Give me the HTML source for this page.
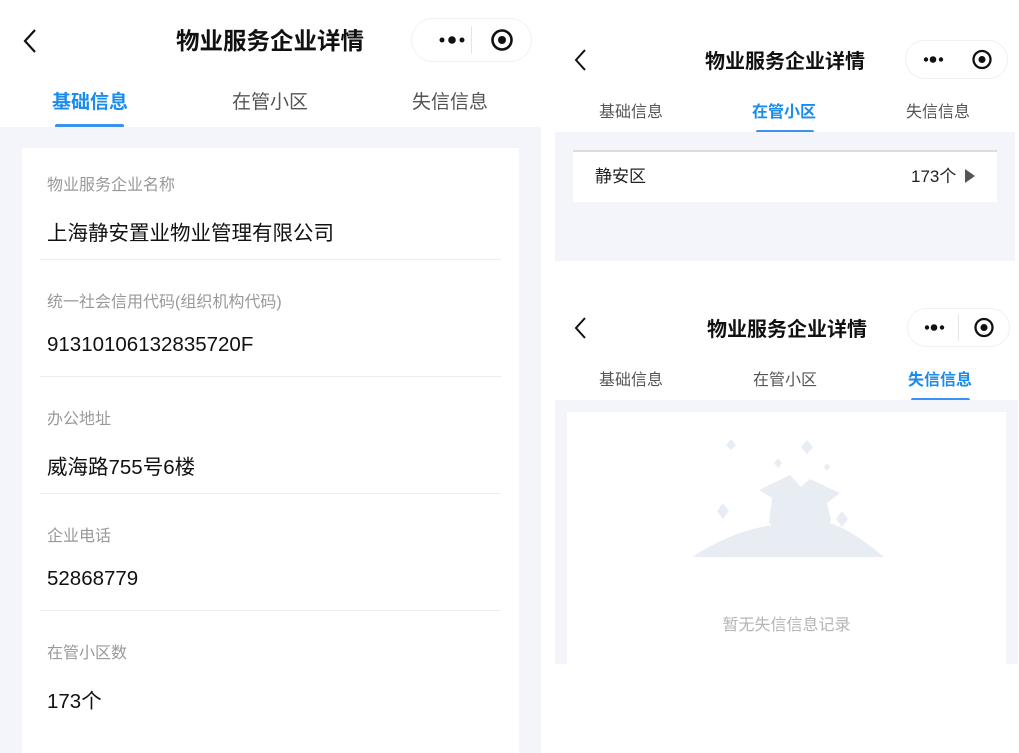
<!DOCTYPE html>
<html><head><meta charset="utf-8"><style>
*{margin:0;padding:0;box-sizing:border-box}
body{width:1019px;height:753px;background:#fff;position:relative;overflow:hidden;font-family:"Liberation Sans","Noto Sans CJK SC",sans-serif}
.a{position:absolute;white-space:nowrap}
.g{background:#f4f5fa;position:absolute}
.lab{position:absolute;left:47px;font-size:16px;color:#999}
.val{position:absolute;left:47px;font-size:20.5px;color:#111}
.div{position:absolute;left:40px;width:461px;height:1px;background:#ececec}
.cap{position:absolute;border:1px solid #f0f0f0;border-radius:24px;background:#fff}
</style></head><body>

<!-- LEFT PANEL -->
<svg class="a" style="left:20px;top:27px" width="20" height="28" viewBox="0 0 20 28"><path d="M15 3 L5 14 L15 25" fill="none" stroke="#111" stroke-width="2.2"/></svg>
<div class="a" style="left:0;width:540px;top:22px;text-align:center;font-size:23.5px;font-weight:bold;color:#111">物业服务企业详情</div>
<div class="cap" style="left:411px;top:18px;width:121px;height:44px"></div>
<svg class="a" style="left:411px;top:18px" width="121" height="44"><circle cx="31" cy="22" r="2.5" fill="#111"/><circle cx="41" cy="22" r="3.8" fill="#111"/><circle cx="51" cy="22" r="2.5" fill="#111"/><line x1="60.5" y1="8" x2="60.5" y2="36" stroke="#e6e6e6"/><circle cx="91" cy="22" r="9.5" fill="none" stroke="#111" stroke-width="2.6"/><circle cx="91" cy="22" r="4" fill="#111"/></svg>
<div class="a" style="left:52px;top:87px;font-size:19px;font-weight:bold;color:#1a8cee">基础信息</div>
<div class="a" style="left:232px;top:87px;font-size:19px;color:#555">在管小区</div>
<div class="a" style="left:412px;top:87px;font-size:19px;color:#555">失信信息</div>
<div class="a" style="left:55px;top:124px;width:69px;height:4px;border-radius:2px;background:#3a91ee"></div>
<div class="g" style="left:0;top:127px;width:541px;height:626px"></div>
<div class="a" style="left:22px;top:148px;width:497px;height:605px;background:#fff"></div>
<div class="lab" style="top:171px">物业服务企业名称</div>
<div class="val" style="top:216px">上海静安置业物业管理有限公司</div>
<div class="div" style="top:259px"></div>
<div class="lab" style="top:288px">统一社会信用代码(组织机构代码)</div>
<div class="val" style="top:333px">91310106132835720F</div>
<div class="div" style="top:376px"></div>
<div class="lab" style="top:405px">办公地址</div>
<div class="val" style="top:450px">威海路755号6楼</div>
<div class="div" style="top:493px"></div>
<div class="lab" style="top:522px">企业电话</div>
<div class="val" style="top:567px">52868779</div>
<div class="div" style="top:610px"></div>
<div class="lab" style="top:639px">在管小区数</div>
<div class="val" style="top:684px">173个</div>

<!-- RIGHT TOP -->
<svg class="a" style="left:572px;top:48px" width="18" height="24" viewBox="0 0 18 24"><path d="M13 2 L4 12 L13 22" fill="none" stroke="#111" stroke-width="2"/></svg>
<div class="a" style="left:555px;width:460px;top:45px;text-align:center;font-size:20px;font-weight:bold;color:#111">物业服务企业详情</div>
<div class="cap" style="left:905px;top:40px;width:103px;height:39px"></div>
<svg class="a" style="left:905px;top:40px" width="103" height="39"><circle cx="21" cy="19.5" r="2.2" fill="#111"/><circle cx="28" cy="19.5" r="3.3" fill="#111"/><circle cx="36" cy="19.5" r="2.2" fill="#111"/><circle cx="77" cy="19.5" r="8.5" fill="none" stroke="#111" stroke-width="2.3"/><circle cx="77" cy="19.5" r="3.5" fill="#111"/></svg>
<div class="a" style="left:599px;top:98px;font-size:16px;color:#555">基础信息</div>
<div class="a" style="left:752px;top:98px;font-size:16px;font-weight:bold;color:#1a8cee">在管小区</div>
<div class="a" style="left:906px;top:98px;font-size:16px;color:#555">失信信息</div>
<div class="a" style="left:756px;top:130px;width:58px;height:4px;border-radius:2px;background:#3a91ee"></div>
<div class="g" style="left:555px;top:132px;width:460px;height:129px"></div>
<div class="a" style="left:573px;top:150px;width:424px;height:52px;background:#fff;border-top:2px solid #dcdcdf"></div>
<div class="a" style="left:595px;top:162px;font-size:17px;color:#222">静安区</div>
<div class="a" style="left:911px;top:162px;font-size:17px;color:#222">173个</div>
<svg class="a" style="left:964px;top:168px" width="12" height="16"><path d="M1 1 L11 8 L1 15Z" fill="#555"/></svg>

<!-- RIGHT BOTTOM -->
<svg class="a" style="left:572px;top:316px" width="18" height="24" viewBox="0 0 18 24"><path d="M13 2 L4 12 L13 22" fill="none" stroke="#111" stroke-width="2"/></svg>
<div class="a" style="left:557px;width:460px;top:313px;text-align:center;font-size:20px;font-weight:bold;color:#111">物业服务企业详情</div>
<div class="cap" style="left:907px;top:308px;width:103px;height:39px"></div>
<svg class="a" style="left:907px;top:308px" width="103" height="39"><circle cx="20" cy="19.5" r="2.2" fill="#111"/><circle cx="27" cy="19.5" r="3.3" fill="#111"/><circle cx="35" cy="19.5" r="2.2" fill="#111"/><line x1="51.5" y1="6" x2="51.5" y2="33" stroke="#e6e6e6"/><circle cx="77" cy="19.5" r="8.5" fill="none" stroke="#111" stroke-width="2.3"/><circle cx="77" cy="19.5" r="3.5" fill="#111"/></svg>
<div class="a" style="left:599px;top:366px;font-size:16px;color:#555">基础信息</div>
<div class="a" style="left:753px;top:366px;font-size:16px;color:#555">在管小区</div>
<div class="a" style="left:908px;top:366px;font-size:16px;font-weight:bold;color:#1a8cee">失信信息</div>
<div class="a" style="left:911px;top:398px;width:59px;height:4px;border-radius:2px;background:#3a91ee"></div>
<div class="g" style="left:555px;top:400px;width:463px;height:264px"></div>
<div class="a" style="left:567px;top:412px;width:439px;height:252px;background:#fff"></div>
<svg class="a" style="left:692px;top:435px" width="192" height="122" viewBox="0 0 192 122">
<g fill="#e8edf4">
<path d="M39 4 L44 10 L39 15 L34 10Z"/>
<path d="M115 5 L121 12 L115 19 L109 12Z"/>
<path d="M86 23 L90 28 L86 33 L82 28Z"/>
<path d="M135 28 L138 32 L135 36 L132 32Z"/>
<path d="M31 68 L37 76 L31 84 L25 76Z"/>
<path d="M150 76 L156 84 L150 92 L144 84Z"/>
<path d="M0 122 Q40 96 80 90 L77 88 L80 63 L67 55 L98 40 L109 52 L118 44 L148 58 L135 68 L139 85 L138 88 Q160 95 192 122Z"/>
</g></svg>
<div class="a" style="left:567px;width:439px;top:611px;text-align:center;font-size:16px;color:#b5b5b8">暂无失信信息记录</div>
</body></html>
